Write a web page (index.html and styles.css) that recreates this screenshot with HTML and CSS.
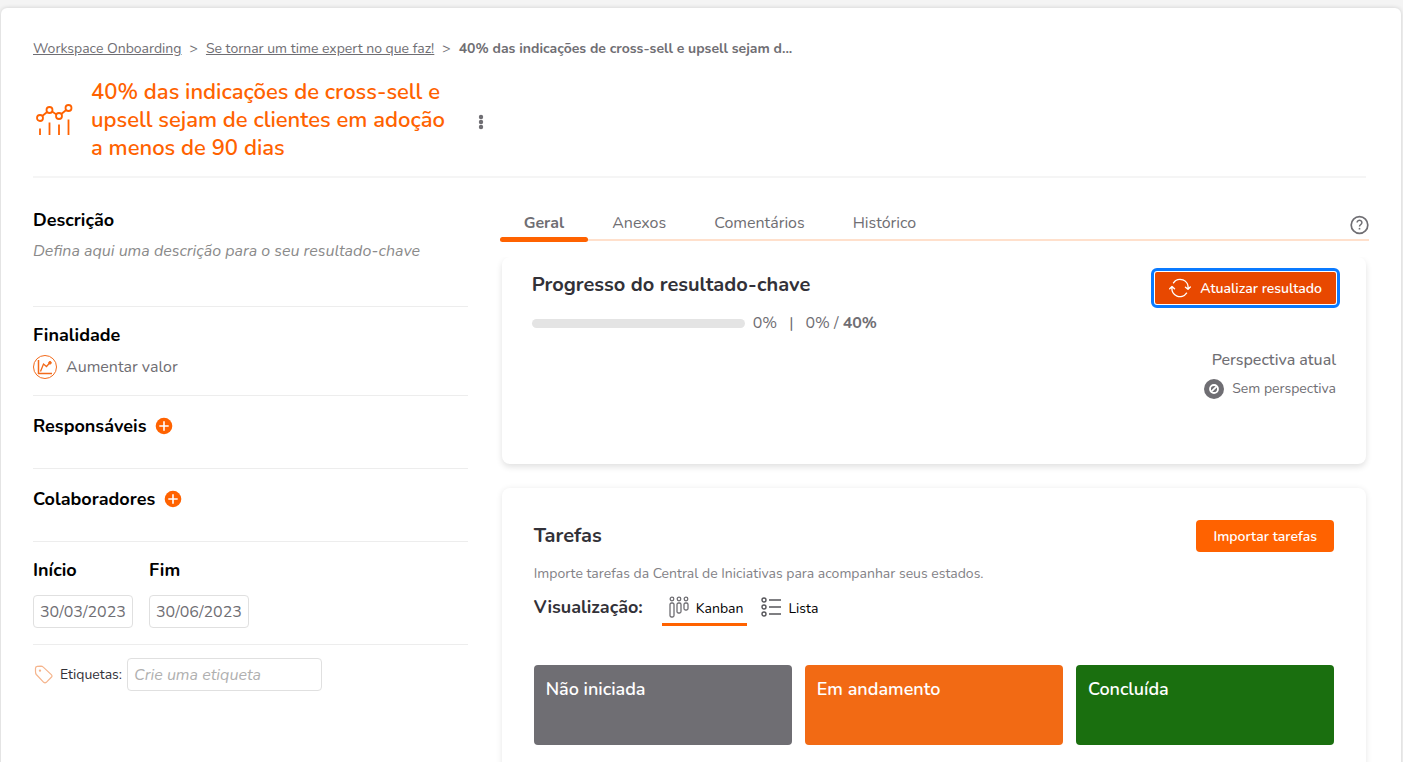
FILE: index.html
```
<!DOCTYPE html>
<html lang="pt-BR">
<head>
    <meta charset="UTF-8">
    <meta name="viewport" content="width=device-width, initial-scale=1.0">
    <title>Resultado-chave</title>
    <link rel="stylesheet" href="styles.css">
</head>
<body>
    <main class="page">
        <nav class="breadcrumb">
            <a href="#">Workspace Onboarding</a>
            <span>&gt;</span>
            <a href="#">Se tornar um time expert no que faz!</a>
            <span>&gt;</span>
            <strong>40% das indicações de cross-sell e upsell sejam d...</strong>
        </nav>
        <header class="title-bar">
            <svg class="title-icon" width="40" height="40" viewBox="0 0 40 40" fill="none" stroke="#ff6200" stroke-width="1.800">
                <circle cx="5" cy="18" r="3"/>
                <circle cx="14.500" cy="10" r="3"/>
                <circle cx="24" cy="16" r="3"/>
                <circle cx="33.500" cy="8" r="3"/>
                <path d="M7.300 16l4.800-4M17 11.600l4.500 2.800M26.300 14l4.900-4M5 28.500V35M14.500 22.500V35M24 24.500V35M33.500 19.500V35"/>
            </svg>
            <h1>40% das indicações de cross-sell e upsell sejam de clientes em adoção a menos de 90 dias</h1>
            <button class="menu-button" aria-label="Mais opções">
                <svg width="6" height="16" viewBox="0 0 6 16" fill="#6f6e73">
                    <circle cx="3" cy="3" r="2.200"/>
                    <circle cx="3" cy="8" r="2.200"/>
                    <circle cx="3" cy="13" r="2.200"/>
                </svg>
            </button>
        </header>

        <div class="columns">
            <aside class="sidebar">
                <section class="block block-description">
                    <h2>Descrição</h2>
                    <p class="hint">Defina aqui uma descrição para o seu resultado-chave</p>
                </section>
                <section class="block block-goal">
                    <h2>Finalidade</h2>
                    <p class="goal">
                        <svg width="24" height="24" viewBox="0 0 24 24" fill="none" stroke="#f26a1b">
                            <circle cx="12" cy="12" r="11.500"/>
                            <path d="M5.500 5v13.500H19" stroke-width="1.500"/>
                            <path d="M7.500 16.500l3-7.500 3 2.500 3.500-4" stroke-width="1.300"/>
                            <circle cx="17" cy="7.800" r="1.300" fill="#f26a1b"/>
                        </svg>
                        Aumentar valor
                    </p>
                </section>
                <section class="block block-people">
                    <h2>Responsáveis</h2>
                    <button class="add-button" aria-label="Adicionar responsável">
                        <svg width="18" height="18" viewBox="0 0 18 18">
                            <circle cx="9" cy="9" r="8.300" fill="#ff6200"/>
                            <path d="M9 4.300v9.400M4.300 9h9.400" stroke="#fff" stroke-width="1.600"/>
                        </svg>
                    </button>
                </section>
                <section class="block block-people">
                    <h2>Colaboradores</h2>
                    <button class="add-button" aria-label="Adicionar colaborador">
                        <svg width="18" height="18" viewBox="0 0 18 18">
                            <circle cx="9" cy="9" r="8.300" fill="#ff6200"/>
                            <path d="M9 4.300v9.400M4.300 9h9.400" stroke="#fff" stroke-width="1.600"/>
                        </svg>
                    </button>
                </section>
                <section class="block block-dates">
                    <div class="date">
                        <label for="inicio">Início</label>
                        <input type="text" id="inicio" value="30/03/2023">
                    </div>
                    <div class="date">
                        <label for="fim">Fim</label>
                        <input type="text" id="fim" value="30/06/2023">
                    </div>
                </section>
                <section class="tags">
                    <svg width="22" height="22" viewBox="0 0 22 22" fill="none" stroke="#f5b48c" stroke-width="1.200">
                        <path d="M2.500 7.500V4.200Q2.500 2.500 4.200 2.300L8 2.100q1.200 0 2 .8l8.300 7.700q1.400 1.400 0 2.700l-5 5q-1.300 1.200-2.600 0L3.300 10.500q-.8-.9-.8-3z"/>
                        <circle cx="7" cy="6.600" r=".6"/>
                    </svg>
                    <label for="etiqueta">Etiquetas:</label>
                    <input type="text" id="etiqueta" placeholder="Crie uma etiqueta">
                </section>
            </aside>

            <div class="content">
                <div class="tabs">
                    <button class="tab active">Geral</button>
                    <button class="tab">Anexos</button>
                    <button class="tab">Comentários</button>
                    <button class="tab">Histórico</button>
                    <button class="help-button" aria-label="Ajuda">
                        <svg width="20" height="20" viewBox="0 0 20 20" fill="none" stroke="#6f6e73">
                            <circle cx="10.500" cy="10" r="8.300" stroke-width="1.700"/>
                            <path d="M8.100 7.600a2.400 2.300 0 1 1 3.600 2c-.8.500-1.200.9-1.200 2" stroke-width="1.500"/>
                            <path d="M10.500 12.900v1.600" stroke-width="1.600"/>
                        </svg>
                    </button>
                </div>

                <section class="card progress-card">
                    <div>
                        <h3>Progresso do resultado-chave</h3>
                        <div class="progress-row">
                            <div class="progress-track"></div>
                            <span>0%</span>
                            <span class="separator">|</span>
                            <span>0% / <strong>40%</strong></span>
                        </div>
                    </div>
                    <div class="progress-side">
                        <button class="primary-button focused">
                            <svg width="22" height="20" viewBox="0 0 22 20" fill="none" stroke="#fff" stroke-width="1.400" stroke-linecap="round" stroke-linejoin="round">
                                <path d="M4.500 4.800A8 8 0 0 1 19 10.500M16.500 9.300l2.500 2 2.300-2.300"/>
                                <path d="M17.500 15.200A8 8 0 0 1 3 9.500M.700 10.800L3 8.500l2.500 2.200"/>
                            </svg>
                            Atualizar resultado
                        </button>
                        <p class="perspective-title">Perspectiva atual</p>
                        <p class="perspective">
                            <svg width="20" height="20" viewBox="0 0 20 20">
                                <circle cx="10" cy="10" r="10" fill="#6f6e73"/>
                                <circle cx="10" cy="10" r="4" fill="none" stroke="#fff" stroke-width="1.800"/>
                                <path d="M7.300 12.700l5.400-5.400" stroke="#fff" stroke-width="1.700"/>
                            </svg>
                            Sem perspectiva
                        </p>
                    </div>
                </section>

                <section class="card tasks-card">
                    <div class="tasks-header">
                        <h3>Tarefas</h3>
                        <button class="primary-button">Importar tarefas</button>
                    </div>
                    <p class="tasks-hint">Importe tarefas da Central de Iniciativas para acompanhar seus estados.</p>
                    <div class="views">
                        <h4>Visualização:</h4>
                        <button class="view active">
                            <svg width="20" height="22" viewBox="0 0 20 22" fill="none" stroke="#6f6e73" stroke-width="1.300">
                                <circle cx="3" cy="3" r="1.800"/>
                                <circle cx="10" cy="3" r="1.800"/>
                                <circle cx="17" cy="3" r="1.800"/>
                                <rect x="1" y="7" width="4" height="14" rx="1.500"/>
                                <rect x="8" y="7" width="4" height="10" rx="1.500"/>
                                <rect x="15" y="7" width="4" height="7" rx="1.500"/>
                            </svg>
                            <span>Kanban</span>
                        </button>
                        <button class="view">
                            <svg width="20" height="22" viewBox="0 0 20 22" fill="none" stroke="#56555a" stroke-width="1.400">
                                <circle cx="3" cy="4" r="2"/>
                                <circle cx="3" cy="11" r="2"/>
                                <circle cx="3" cy="18" r="2"/>
                                <path d="M8 4h12M8 11h12M8 18h12"/>
                            </svg>
                            <span>Lista</span>
                        </button>
                    </div>
                    <div class="kanban">
                        <div class="kanban-column todo">Não iniciada</div>
                        <div class="kanban-column doing">Em andamento</div>
                        <div class="kanban-column done">Concluída</div>
                    </div>
                </section>
            </div>
        </div>
    </main>
</body>
</html>
```
FILE: styles.css
```
* {
    box-sizing: border-box;
}
body {
    font-family: Nunito, "Open Sans", sans-serif;
    font-size: 16px;
    line-height: 24px;
    color: #6f6e73;
    margin: 0;
    padding: 8px 2px 0 1px;
    min-height: 100vh;
    background-color: #f4f4f4;
    display: flex;
}
h1, h2, h3, h4, p {
    margin: 0;
}
svg {
    display: block;
    flex: none;
}
button, input {
    font-family: inherit;
}
button {
    padding: 0;
    border: none;
    background: none;
    color: inherit;
    cursor: pointer;
}
.page {
    flex: 1;
    min-width: 0;
    padding: 29px 32px 0;
    background-color: #fff;
    border-radius: 6px 6px 0 0;
    box-shadow: 0 0 4px rgba(0, 0, 0, 0.16);
}
.breadcrumb {
    display: flex;
    gap: 8px;
    font-size: 14px;
}
.breadcrumb a {
    color: inherit;
}
.title-bar {
    display: flex;
    align-items: center;
    padding: 17px 0 14px;
    margin-right: 3px;
    border-bottom: 2px solid #f5f5f5;
}
.title-icon {
    margin-left: 2px;
}
.title-bar h1 {
    width: 360px;
    margin-left: 16px;
    font-size: 22px;
    line-height: 28px;
    font-weight: 600;
    color: #ff6200;
}
.menu-button {
    margin-left: 27px;
    padding-top: 4px;
}
.columns {
    display: grid;
    grid-template-columns: 1fr 2fr;
    gap: 32px;
}
/* coluna da esquerda */
.block {
    border-bottom: 1px solid #ededed;
}
.block h2, .date label {
    font-size: 18px;
    line-height: 24px;
    font-weight: 700;
    color: #000;
}
.block-description {
    padding-top: 30px;
    height: 129px;
}
.hint {
    margin-top: 7px;
    font-style: italic;
    color: #8a8a8a;
}
.block-goal {
    padding: 16px 0;
}
.goal {
    display: flex;
    gap: 9px;
    margin-top: 8px;
}
.block-people {
    display: flex;
    align-items: center;
    gap: 9px;
    padding: 18px 0 30px;
}
.block-dates {
    display: flex;
    gap: 16px;
    padding: 16px 0;
}
.date {
    display: flex;
    flex-direction: column;
    gap: 13px;
    width: 100px;
}
input {
    width: 100%;
    height: 33px;
    padding: 0 6px;
    border: 1px solid #e0e0e0;
    border-radius: 4px;
    font-size: 16px;
    color: #6f6e73;
    background-color: #fff;
}
.tags {
    display: flex;
    align-items: center;
    padding-top: 13px;
    font-size: 14px;
    color: #323138;
}
.tags label {
    margin: 0 5px;
}
.tags input {
    width: 195px;
}
input::placeholder {
    font-style: italic;
    color: #b0b0b0;
}
/* abas */
.tabs {
    display: flex;
    padding-top: 29px;
    background: linear-gradient(#ffe0cc, #ffe0cc) left 0 bottom 1px / 100% 2px no-repeat;
}
.tab {
    padding: 4px 24px 2px;
    font-size: 16px;
    line-height: 24px;
    border-bottom: 5px solid transparent;
}
.tab.active {
    font-weight: 700;
    position: relative;
}
.tab.active::after {
    content: "";
    position: absolute;
    left: 0;
    right: 0;
    bottom: -5px;
    height: 5px;
    border-radius: 3px;
    background-color: #ff6200;
}
.help-button {
    margin-left: auto;
}
.card {
    margin: 0 3px 24px 2px;
    background-color: #fff;
    border-radius: 8px;
    box-shadow: 0 3px 6px rgba(0, 0, 0, 0.12);
}
.card h3 {
    font-size: 20px;
    line-height: 28px;
    font-weight: 700;
    color: #323138;
}
.progress-card {
    display: flex;
    justify-content: space-between;
    margin-top: 15px;
    padding: 14px 30px 63px;
    clip-path: inset(0 -8px -12px -8px);
}
.progress-row {
    display: flex;
    align-items: center;
    margin-top: 12px;
}
.progress-track {
    width: 213px;
    height: 9px;
    margin-right: 8px;
    border-radius: 5px;
    background-color: #e4e4e4;
}
.separator {
    margin: 0 12px;
}
.progress-side {
    display: flex;
    flex-direction: column;
    align-items: flex-end;
}
.primary-button {
    display: flex;
    align-items: center;
    gap: 9px;
    height: 32px;
    padding: 0 17px;
    border-radius: 4px;
    font-size: 14px;
    font-weight: 600;
    color: #fff;
    background-color: #ff6200;
}
.primary-button.focused {
    padding: 0 14px;
    margin-top: 1px;
    border-radius: 2px;
    background-color: #e84800;
    outline: 3px solid #0a7aff;
    outline-offset: 1px;
}
.perspective-title {
    margin-top: 44px;
    font-weight: 500;
}
.perspective {
    display: flex;
    align-items: center;
    gap: 8px;
    margin-top: 5px;
    font-size: 14px;
}
/* tarefas */
.tasks-card {
    margin-bottom: 0;
    padding: 32px 32px 40px;
    box-shadow: 0 1px 6px rgba(0, 0, 0, 0.1);
}
.tasks-header {
    display: flex;
    align-items: center;
    justify-content: space-between;
}
.tasks-hint {
    margin-top: 10px;
    font-size: 14px;
    color: #828186;
}
.views {
    display: flex;
    margin-top: 8px;
}
.views h4 {
    margin-right: 19px;
    font-size: 18px;
    line-height: 26px;
    font-weight: 700;
    color: #323138;
}
.view {
    display: flex;
    align-items: center;
    gap: 7px;
    height: 32px;
    padding: 0 4px 4px 7px;
    margin-right: 7px;
    font-size: 14px;
    color: #000;
    border-bottom: 3px solid transparent;
}
.view span {
    padding-top: 4px;
}
.view.active {
    border-color: #ff6200;
}
.kanban {
    display: grid;
    grid-template-columns: repeat(3, 1fr);
    gap: 13px;
    margin-top: 39px;
}
.kanban-column {
    height: 80px;
    padding: 12px;
    border-radius: 4px;
    font-size: 18px;
    font-weight: 600;
    color: #fff;
}
.todo {
    background-color: #6f6e73;
}
.doing {
    background-color: #f26a14;
}
.done {
    background-color: #1a6f0f;
}
```
